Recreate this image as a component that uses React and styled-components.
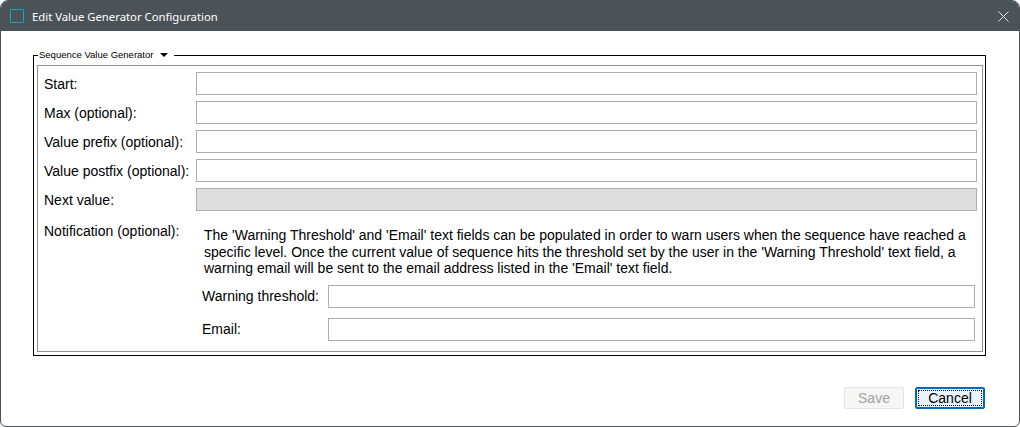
import React from 'react'
import styled, { createGlobalStyle } from 'styled-components'

const GlobalStyle = createGlobalStyle`
  html, body {
    margin: 0;
    padding: 0;
    background: #ffffff;
  }
  * {
    box-sizing: border-box;
  }
`

const Window = styled.div`
  width: 1020px;
  height: 427px;
  display: flex;
  flex-direction: column;
  border: 1px solid #4c5358;
  border-radius: 8px 8px 6px 6px;
  overflow: hidden;
  background: #ffffff;
  font-family: 'Liberation Sans', Arial, sans-serif;
  font-size: 14px;
  color: #000000;
`

const TitleBar = styled.div`
  height: 30px;
  flex-shrink: 0;
  display: flex;
  align-items: center;
  padding: 0 6px 0 9px;
  background: #4c5358;
  color: #ffffff;
`

const AppIcon = styled.span`
  width: 14px;
  height: 14px;
  border: 1.5px solid #14a5b9;
  margin-right: 8px;
`

const Title = styled.div`
  flex: 1;
  font-family: 'Noto Sans', 'Open Sans', sans-serif;
  font-size: 11.3px;
`

const CloseButton = styled.button`
  border: 0;
  background: transparent;
  padding: 0;
  width: 20px;
  height: 20px;
  display: flex;
  align-items: center;
  justify-content: center;
`

const Body = styled.div`
  flex: 1;
  display: flex;
  flex-direction: column;
  padding: 24px 33px 0 32px;
`

const Group = styled.div`
  position: relative;
  border: 1px solid #000000;
  padding: 9px 2px 3px 3px;
`

const Legend = styled.div`
  position: absolute;
  top: -7px;
  left: 4px;
  display: flex;
  align-items: center;
  gap: 7px;
  padding: 0 6px 0 1px;
  background: #ffffff;
  font-family: 'Liberation Sans', Arial, sans-serif;
  font-size: 9.5px;
  line-height: 12px;
`

const Caret = styled.span`
  width: 0;
  height: 0;
  border-left: 4px solid transparent;
  border-right: 4px solid transparent;
  border-top: 4px solid #000000;
`

const Panel = styled.div`
  border: 1px solid #8e9296;
  padding: 6px 5px 10px 6px;
  display: grid;
  grid-template-columns: 152px 1fr;
  row-gap: 6px;
  align-items: center;
`

const Label = styled.div`
  white-space: nowrap;
  line-height: 16px;
  align-self: ${p => (p.$top ? 'start' : 'center')};
  padding-top: ${p => (p.$top ? '6px' : '0')};
`

const Field = styled.input`
  height: 23px;
  width: 100%;
  border: 1px solid #adadad;
  background: ${p => (p.disabled ? '#dedede' : '#ffffff')};
  font: inherit;
  padding: 0 4px;
  outline: none;
`

const Notification = styled.div`
  display: flex;
  flex-direction: column;
  padding-top: 10px;
`

const Note = styled.p`
  margin: 0 0 8px 8px;
  line-height: 16.5px;
`

const SubGrid = styled.div`
  display: grid;
  grid-template-columns: 126px 1fr;
  row-gap: 10px;
  align-items: center;
  padding: 0 2px 0 6px;
`

const Footer = styled.div`
  margin-top: 31px;
  display: flex;
  justify-content: flex-end;
  gap: 11px;
  padding-right: 1px;
`

const Button = styled.button`
  height: 22px;
  width: ${p => p.$w}px;
  font-family: 'Liberation Sans', Arial, sans-serif;
  font-size: 14px;
  border-radius: 2px;
  padding: 0;
  color: ${p => (p.disabled ? '#a2a2a2' : '#000000')};
  background: ${p => (p.disabled ? '#f6f6f6' : '#eaf3fb')};
  border: 1px solid ${p => (p.disabled ? '#e3e3e3' : '#0067c0')};
  box-shadow: ${p => (p.$focus ? 'inset 0 0 0 1px #0067c0' : 'none')};
  outline: ${p => (p.$focus ? '1px dotted #000000' : 'none')};
  outline-offset: -4px;
`

export default function App() {
  return (
    <>
      <GlobalStyle />
      <Window>
        <TitleBar>
          <AppIcon />
          <Title>Edit Value Generator Configuration</Title>
          <CloseButton aria-label="Close">
            <svg width="11" height="11" viewBox="0 0 11 11">
              <path d="M0.5 0.5 L10.5 10.5 M10.5 0.5 L0.5 10.5" stroke="#e8e8e8" strokeWidth="1" />
            </svg>
          </CloseButton>
        </TitleBar>
        <Body>
          <Group>
            <Legend>
              Sequence Value Generator
              <Caret />
            </Legend>
            <Panel>
              <Label>Start:</Label>
              <Field />
              <Label>Max (optional):</Label>
              <Field />
              <Label>Value prefix (optional):</Label>
              <Field />
              <Label>Value postfix (optional):</Label>
              <Field />
              <Label>Next value:</Label>
              <Field disabled />
              <Label $top>Notification (optional):</Label>
              <Notification>
                <Note>
                  The 'Warning Threshold' and 'Email' text fields can be populated in order to warn users when the
                  sequence have reached a specific level. Once the current value of sequence hits the threshold set by
                  the user in the 'Warning Threshold' text field, a warning email will be sent to the email address
                  listed in the 'Email' text field.
                </Note>
                <SubGrid>
                  <Label>Warning threshold:</Label>
                  <Field />
                  <Label>Email:</Label>
                  <Field />
                </SubGrid>
              </Notification>
            </Panel>
          </Group>
          <Footer>
            <Button $w={60} disabled>Save</Button>
            <Button $w={70} $focus>Cancel</Button>
          </Footer>
        </Body>
      </Window>
    </>
  )
}
